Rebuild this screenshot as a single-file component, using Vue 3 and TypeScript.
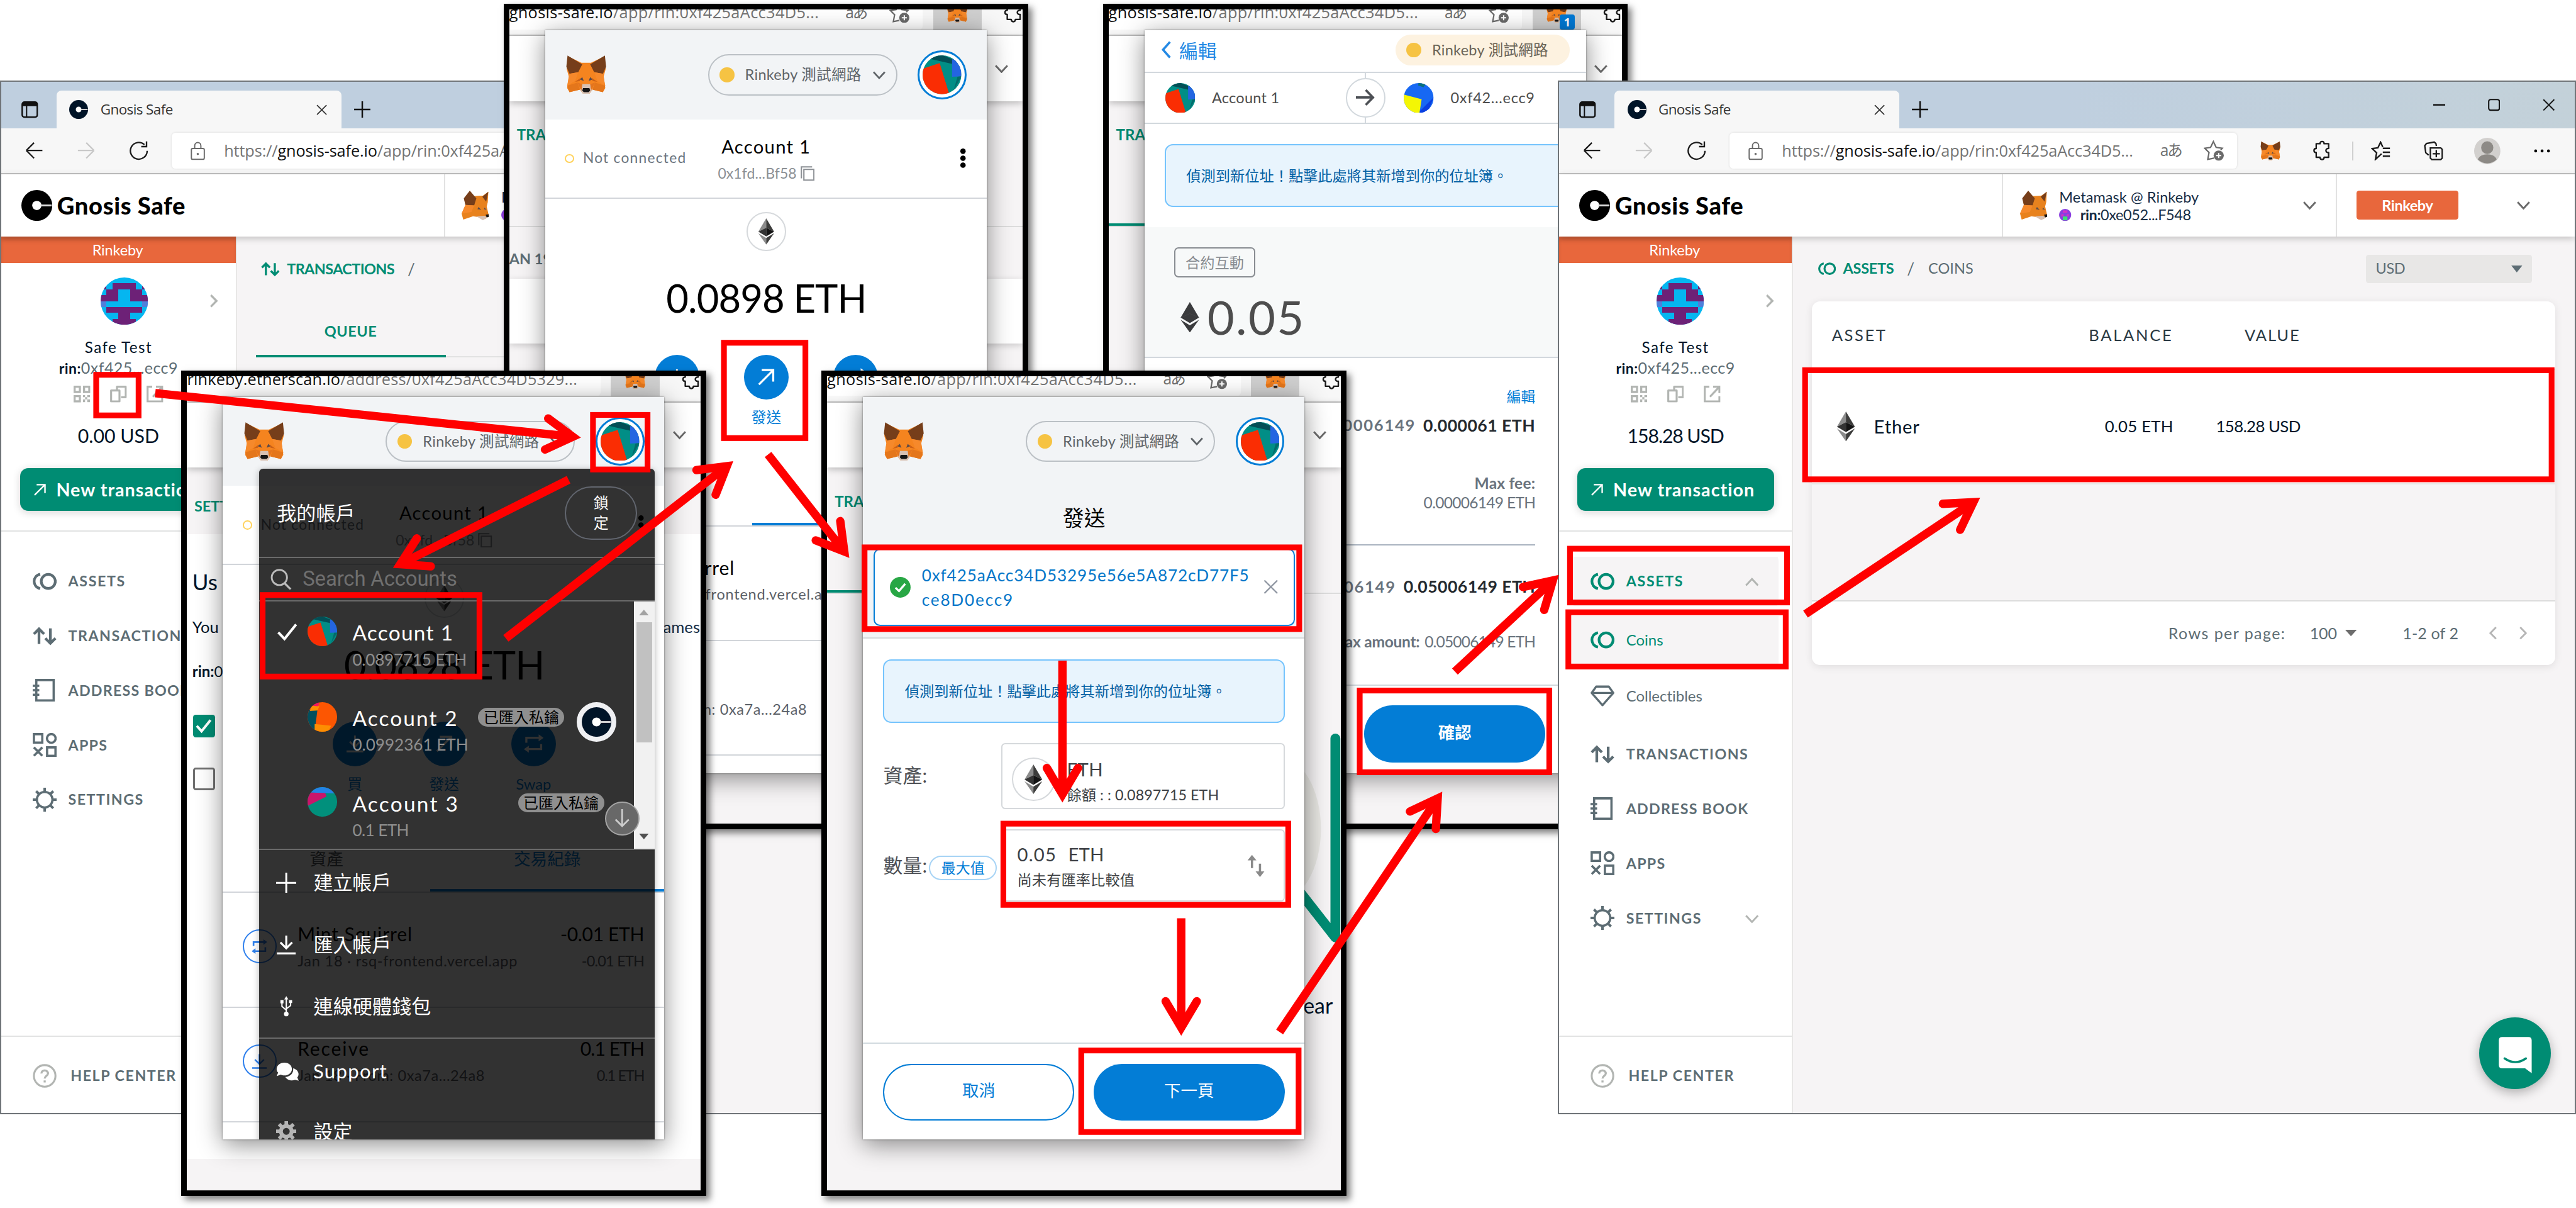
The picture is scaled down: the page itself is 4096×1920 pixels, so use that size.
<script setup lang="ts">
import type { Directive } from 'vue'

const STAGE_WIDTH = 1568

/* Spreads the letters of a label so that it takes exactly the given width. */
const vFit: Directive<HTMLElement, number> = {
  mounted(el, { value }) {
    const stage = el.closest('.stage') as HTMLElement
    const unit = stage.getBoundingClientRect().width / STAGE_WIDTH
    const width = el.getBoundingClientRect().width / unit
    const count = Array.from((el.textContent ?? '').trim()).length
    el.style.letterSpacing = `${(value - width) / count}px`
  },
}

interface Win { id: 'before' | 'after'; left: number; z: number; total: string; totalWidth: number }
const wins: Win[] = [
  { id: 'before', left: 0, z: 0, total: '0.00 USD', totalWidth: 49.5 },
  { id: 'after', left: 948.3, z: 6, total: '158.28 USD', totalWidth: 58.6 },
]

interface NavItem { icon: string; label: string; width: number; kind?: 'on' | 'sub-on' | 'sub'; chev?: string }
const navs: Record<Win['id'], NavItem[]> = {
  before: [
    { icon: 'assets', label: 'ASSETS', width: 35 },
    { icon: 'tx', label: 'TRANSACTIONS', width: 74.5 },
    { icon: 'book', label: 'ADDRESS BOOK', width: 74.5 },
    { icon: 'apps', label: 'APPS', width: 24 },
    { icon: 'gear', label: 'SETTINGS', width: 46 },
  ],
  after: [
    { icon: 'assets', label: 'ASSETS', width: 35, kind: 'on', chev: 'up' },
    { icon: 'assets', label: 'Coins', width: 22.5, kind: 'sub-on' },
    { icon: 'gem', label: 'Collectibles', width: 46.5, kind: 'sub' },
    { icon: 'tx', label: 'TRANSACTIONS', width: 74.5 },
    { icon: 'book', label: 'ADDRESS BOOK', width: 74.5 },
    { icon: 'apps', label: 'APPS', width: 24 },
    { icon: 'gear', label: 'SETTINGS', width: 46, chev: 'down' },
  ],
}

interface Frame { id: 'home' | 'confirm' | 'accounts' | 'send'; left: number; top: number }
const frames: Frame[] = [
  { id: 'home', left: 306.5, top: 2.3 },
  { id: 'confirm', left: 671.3, top: 2.3 },
  { id: 'accounts', left: 110.4, top: 225.3 },
  { id: 'send', left: 500, top: 225.3 },
]

const history = [
  { icon: 'swap', title: 'Mint Squirrel', tw: 70, sub: 'Jan 18 · rsq-frontend.vercel.app', sw: 134, amount: '-0.01 ETH', aw: 51, small: '-0.01 ETH', mw: 38 },
  { icon: 'down', title: 'Receive', tw: 44, sub: 'Jan 18 · From: 0xa7a...24a8', sw: 114, amount: '0.1 ETH', aw: 38.8, small: '0.1 ETH', mw: 28.8 },
]
const accounts = [
  { name: 'Account 1', width: 61.6, balance: '0.0897715 ETH', bw: 69.5, face: 'face1', on: true, imported: false },
  { name: 'Account 2', width: 64.5, balance: '0.0992361 ETH', bw: 70.5, face: 'face2', on: false, imported: true },
  { name: 'Account 3', width: 65, balance: '0.1 ETH', bw: 34.3, face: 'face3', on: false, imported: true },
]

/* Blockie of the safe: p = purple, b = blue, dots show the cyan ground. */
const blockie = ['........', 'p.pppp.p', '.pp..pp.', 'ppp..ppp', 'b......b', '.pppppp.', '...pp...', '..pppp..']
const cells = blockie.flatMap((row, y) =>
  Array.from(row).flatMap((c, x) => (c === '.' ? [] : [{ x, y, fill: c === 'p' ? '#6d2177' : '#4f7fdb' }])),
)

/* Red guide boxes: left, top, right, bottom of the outer edge. */
const boxes = [
  [56.8, 226.3, 86.1, 254.5], [359.2, 250.7, 395.9, 287.4], [158.1, 360.3, 293.6, 413.4],
  [438.9, 206.8, 492, 268.3], [524.5, 331.3, 792.6, 384.5], [609, 499.4, 785.9, 552.3],
  [656.4, 637.4, 792.2, 690.5], [825.9, 418.4, 944.8, 471.6], [953.9, 332.1, 1089.5, 368.3],
  [952.9, 370.8, 1088.7, 407.3], [1097, 223.5, 1554.9, 293.4],
].map(([l, t, r, b]) => ({ x: l + 1.75, y: t + 1.75, w: r - l - 3.5, h: b - t - 3.5 }))

/* Guide arrows: tail x, tail y, tip x, tip y. */
const arrows = [
  [94.5, 239.2, 353.8, 266.3], [346.1, 291.9, 239, 345.6], [307.9, 388.4, 446.5, 280.5],
  [467.5, 276.5, 517.1, 339.6], [646.7, 402, 646.7, 488.5], [719, 558.7, 719, 630.4],
  [778.9, 627.9, 878, 481.5], [885.6, 408.6, 949, 349.7], [1099, 373.6, 1205.5, 302.7],
].map(([x1, y1, x2, y2]) => {
  const len = Math.hypot(x2 - x1, y2 - y1)
  const ux = (x2 - x1) / len
  const uy = (y2 - y1) / len
  const at = (back: number, side: number) =>
    `${(x2 - ux * back - uy * side).toFixed(2)},${(y2 - uy * back + ux * side).toFixed(2)}`
  return { shaft: `M${x1},${y1}L${at(7, 0)}`, head: `M${at(21.2, 9.5)}L${at(5.2, 0)}L${at(21.2, -9.5)}` }
})
</script>

<template>
  <div class="stage">
    <svg class="defs" width="0" height="0">
      <symbol id="fox" viewBox="0 0 100 100">
        <path d="M4 4 38 20H62L96 4 99 36 94 54 98 84 92 94 66 88 58 98H42L34 88 8 94 2 84 6 54 1 36Z" fill="#f5841f" />
        <path d="M3 2 40 24 30 44 8 48 0 30ZM97 2 60 24 70 44 92 48 100 30Z" fill="#763e1a" />
        <path d="M8 48 30 44 22 66 2 78ZM92 48 70 44 78 66 98 78Z" fill="#f6892b" />
        <path d="M2 78 28 70 34 88 8 94ZM98 78 72 70 66 88 92 94Z" fill="#e4761b" />
        <path d="M36 58 22 68 34 66ZM64 58 78 68 66 66Z" fill="#cd6116" />
        <path d="M34 62 44 66 40 56ZM66 62 56 66 60 56Z" fill="#5b4a4a" />
        <path d="M34 88 40 74 60 74 66 88 58 98H42Z" fill="#d7c1b3" />
        <path d="M28 70 40 74 38 90ZM72 70 60 74 62 90Z" fill="#e4751f" />
        <path d="M42 84H58L60 90 56 94H44L40 90Z" fill="#161616" />
      </symbol>
      <symbol id="foxside" viewBox="0 0 100 108">
        <path d="M30 2 44 20 78 18 98 4 96 42 92 58 100 92 86 104 70 98 42 94 6 106 0 84 14 52 10 30Z" fill="#e8821e" />
        <path d="M30 0 54 28 46 54 14 52 8 28Z" fill="#763e1a" />
        <path d="M98 4 76 22 90 40Z" fill="#763e1a" />
        <path d="M14 52 46 54 36 78 0 84Z" fill="#f6892b" />
        <path d="M62 60 72 70 58 68ZM84 62 92 70 82 68Z" fill="#5b4a4a" />
        <path d="M54 94 84 92 96 98 78 108Z" fill="#d7c1b3" />
        <path d="M88 88 100 86 100 96 92 98Z" fill="#161616" />
      </symbol>
      <symbol id="eth" viewBox="0 0 60 100">
        <path d="M30 0 0 51 30 36Z" fill="#8c8c8c" /><path d="M30 0 60 51 30 36Z" fill="#3c3c3b" />
        <path d="M0 51 30 36V69Z" fill="#343434" /><path d="M60 51 30 36V69Z" fill="#141414" />
        <path d="M0 57 30 75V100Z" fill="#8c8c8c" /><path d="M60 57 30 75V100Z" fill="#3c3c3b" />
      </symbol>
      <symbol id="ethflat" viewBox="0 0 60 100">
        <path d="M30 0 60 51 30 69 0 51Z" fill="#3a3b3d" /><path d="M0 58 30 76 60 58 30 100Z" fill="#3a3b3d" />
        <path d="M0 51 30 38 60 51" fill="none" stroke="#505153" stroke-width="1" />
      </symbol>
      <clipPath id="disc"><circle cx="50" cy="50" r="50" /></clipPath>
      <symbol id="face1" viewBox="0 0 100 100"><g clip-path="url(#disc)"><path d="M0 0H100V100H0Z" fill="#018e86" /><path d="M15 8 42 -4 88 14 76 22Z" fill="#034f56" /><path d="M76 10H100V54L76 55Z" fill="#2465e1" /><path d="M100 54 90 55 80 90Z" fill="#046b6b" /><path d="M-4 36 44 20 70 104H-4Z" fill="#fa2d03" /></g></symbol>
      <symbol id="face2" viewBox="0 0 100 100"><g clip-path="url(#disc)"><path d="M0 0H100V100H0Z" fill="#fc5602" /><path d="M0 26 34 22 24 100H0Z" fill="#034f5d" /><path d="M8 30 14 10 40 14 34 28Z" fill="#fd8e02" /><path d="M18 0H40L36 14 16 12Z" fill="#f5175f" /><path d="M24 74 80 80 70 100H24Z" fill="#fd8e02" /></g></symbol>
      <symbol id="face3" viewBox="0 0 100 100"><g clip-path="url(#disc)"><path d="M0 0H100V100H0Z" fill="#01907c" /><path d="M0 0H100V22L0 18Z" fill="#2383e6" /><path d="M0 18 60 20 64 32 0 64Z" fill="#c9156b" /></g></symbol>
      <symbol id="face4" viewBox="0 0 100 100"><g clip-path="url(#disc)"><path d="M0 0H100V100H0Z" fill="#1768f3" /><path d="M50 0H76L66 14 48 8Z" fill="#0a6f7c" /><path d="M100 48 78 104 48 100Z" fill="#0a3fe0" /><path d="M-2 38 60 54 52 104H-2Z" fill="#f4f604" /></g></symbol>
      <symbol id="logo" viewBox="0 0 100 100">
        <circle cx="50" cy="50" r="50" fill="currentColor" /><circle cx="50" cy="50" r="15" fill="#fff" />
        <path d="M62 50H98" stroke="#ddd" stroke-width="6" />
      </symbol>
      <symbol id="chev" viewBox="0 0 16 10"><path d="M1.5 1.5 8 8.5 14.5 1.5" fill="none" stroke="currentColor" stroke-width="2" /></symbol>
      <symbol id="assets" viewBox="0 0 16 16"><g fill="none" stroke="currentColor" stroke-width="1.8"><ellipse cx="10.4" cy="8" rx="4.7" ry="4.7" /><path d="M5 3.2C-.4 4.4-.4 11.6 5 12.8" /></g></symbol>
      <symbol id="tx" viewBox="0 0 16 16"><path d="M4.2 13.2V3.4M.8 6.6 4.2 3.2 7.6 6.6M11.8 2.8V12.6M8.4 9.4 11.8 12.8 15.2 9.4" fill="none" stroke="currentColor" stroke-width="1.8" /></symbol>
      <symbol id="book" viewBox="0 0 16 16"><path d="M2.4 1.2H14V14.8H2.4ZM0 5H4.4M0 8H4.4M0 11H4.4" fill="none" stroke="currentColor" stroke-width="1.5" /></symbol>
      <symbol id="apps" viewBox="0 0 16 16"><path d="M.8.8H6.4V6.4H.8ZM9.6 9.6H15.2V15.2H9.6ZM.8 9.6 6.4 15.2M6.4 9.6 .8 15.2" fill="none" stroke="currentColor" stroke-width="1.5" /><circle cx="12.4" cy="3.6" r="2.9" fill="none" stroke="currentColor" stroke-width="1.5" /></symbol>
      <symbol id="gear" viewBox="0 0 16 16"><circle cx="8" cy="8" r="5.2" fill="none" stroke="currentColor" stroke-width="1.5" /><path d="M8 0V2.8M8 13.2V16M0 8H2.8M13.2 8H16M2.3 2.3 4.3 4.3M11.7 11.7 13.7 13.7M2.3 13.7 4.3 11.7M11.7 4.3 13.7 2.3" stroke="currentColor" stroke-width="1.7" /></symbol>
      <symbol id="gem" viewBox="0 0 16 16"><path d="M3.8 1.8H12.2L15.2 6 8 14.2.8 6ZM1 6H15" fill="none" stroke="currentColor" stroke-width="1.4" stroke-linejoin="round" /></symbol>
      <symbol id="help" viewBox="0 0 16 16"><circle cx="8" cy="8" r="7.2" fill="none" stroke="currentColor" stroke-width="1.3" /><path d="M5.8 6.4C5.8 3.6 10.3 3.8 10.2 6.4 10.1 8 8 8 8 9.8M8 11V12.4" fill="none" stroke="currentColor" stroke-width="1.4" /></symbol>
      <symbol id="qr" viewBox="0 0 16 16"><path d="M1 1H6V6H1ZM10 1H15V6H10ZM1 10H6V15H1Z" fill="none" stroke="currentColor" stroke-width="2" /><path d="M9 9H11V11H9ZM13 9H15.6V11H13ZM11 11H13V13H11ZM9 13H11V15.8H9ZM13 13H15.6V15.8H13Z" fill="currentColor" /></symbol>
      <symbol id="copy" viewBox="0 0 16 16"><path d="M6.6 4V1H15V11H10.5M1 4.6H9V15H1Z" fill="none" stroke="currentColor" stroke-width="1.9" stroke-linejoin="round" /></symbol>
      <symbol id="ext" viewBox="0 0 16 16"><path d="M5.4 1H1V15H15V10M9 1H15V7M15 1 6 10.6" fill="none" stroke="currentColor" stroke-width="1.9" /></symbol>
      <symbol id="arr" viewBox="0 0 16 16"><path d="M1.5 8H15M1.5 8 8 1.5M1.5 8 8 14.5" fill="none" stroke="currentColor" stroke-width="1.2" /></symbol>
      <symbol id="reload" viewBox="0 0 16 16"><path d="M14.8 8A6.8 6.8 0 1 1 12.6 3M14.3.4V4.6H10" fill="none" stroke="currentColor" stroke-width="1.2" /></symbol>
      <symbol id="lock" viewBox="0 0 14 18"><path d="M2 6.6H12Q13.3 6.6 13.3 8V15.6Q13.3 17.2 12 17.2H2Q.8 17.2.8 15.6V8Q.8 6.6 2 6.6ZM4 6.6V4A3 3.2 0 0 1 10 4V6.6" fill="none" stroke="currentColor" stroke-width="1.2" /><circle cx="7" cy="12" r="1.1" fill="currentColor" /></symbol>
      <symbol id="starplus" viewBox="0 0 16 16"><path d="M8 14 3.2 15 4.2 9.6.8 6.2 5.4 5.6 7.6 1 9.8 5.6 14.6 6.2 13.4 7.6" fill="none" stroke="currentColor" stroke-width="1.1" /><circle cx="11.8" cy="12" r="4" fill="currentColor" /><path d="M9.8 12H13.8M11.8 10V14" stroke="#fff" stroke-width="1" /></symbol>
      <symbol id="puzzle" viewBox="0 0 16 18"><path d="M5 3H6.4C6.4.4 10 .4 10 3H14V7.2C10.8 7 10.8 11 14 10.8V15H10C10 17.6 6.4 17.6 6.4 15H3V10.8C.4 10.8.4 7.2 3 7.2V3Z" fill="none" stroke="currentColor" stroke-width="1.3" stroke-linejoin="round" /></symbol>
      <symbol id="favs" viewBox="0 0 16 16"><path d="M8.6 10.4 3.6 15 4.6 9.6 1 6.2 5.6 5.6 7.8 1 9.6 5M9.6 6H15.4M9.6 9.2H15.4M9.6 12.4H15.4" fill="none" stroke="currentColor" stroke-width="1.2" /></symbol>
      <symbol id="coll" viewBox="0 0 16 16"><path d="M4 11.6 1.6 9.6.8 3.8 2.2 2 8.6.8 10 2 10.4 4M5.4 5.6H14L15.2 6.8V14L14 15.2H6.6L5.4 14ZM10.3 7.4V13.4M7.3 10.4H13.3" fill="none" stroke="currentColor" stroke-width="1.2" /></symbol>
      <symbol id="panel" viewBox="0 0 16 16"><rect x=".8" y=".8" width="14.4" height="14.4" rx="2.2" fill="none" stroke="currentColor" stroke-width="1.5" /><path d="M1 1H15V4.6H1Z" fill="currentColor" /><path d="M5 4V15" stroke="currentColor" stroke-width="1.2" /></symbol>
      <symbol id="cross" viewBox="0 0 16 16"><path d="M1 1 15 15M15 1 1 15" stroke="currentColor" stroke-width="1.6" /></symbol>
      <symbol id="plus" viewBox="0 0 16 16"><path d="M8 0V16M0 8H16" stroke="currentColor" stroke-width="1.5" /></symbol>
      <symbol id="ne" viewBox="0 0 16 16"><path d="M1.5 14.5 14 2M4 1.8H14.2V12" fill="none" stroke="currentColor" stroke-width="1.8" /></symbol>
      <symbol id="down" viewBox="0 0 16 16"><path d="M8 1V10.6M3.4 6.4 8 11 12.6 6.4M.6 15H15.4" fill="none" stroke="currentColor" stroke-width="1.6" /></symbol>
      <symbol id="swap" viewBox="0 0 16 16"><path d="M2 7.4V3.4H13M14 8.6V12.6H3" fill="none" stroke="currentColor" stroke-width="1.7" /><path d="M12 .6 16 3.4 12 6.2ZM4 9.8 0 12.6 4 15.4Z" fill="currentColor" /></symbol>
      <symbol id="usb" viewBox="0 0 16 16"><path d="M8 2V14M4.6 5V8L8 11M11.4 4.6V7.4L8 10" fill="none" stroke="currentColor" stroke-width="1" /><circle cx="8" cy="14" r="1.8" fill="currentColor" /><path d="M8 0 9.6 2.6H6.4ZM3.4 3H5.8V5.6H3.4ZM10.2 3H12.6V5.4H10.2Z" fill="currentColor" /></symbol>
      <symbol id="chat" viewBox="0 0 18 16"><path d="M6.5 1C10 1 12.4 3.4 12.4 6S10 11 6.5 11C5.4 11 4.4 10.8 3.6 10.4L.4 11.6 1.6 8.8C.8 8 .4 7 .4 6 .4 3.4 3 1 6.5 1Z" fill="currentColor" /><path d="M13.4 5.4C16 6 17.6 8 17.6 10 17.6 11 17.2 12 16.6 12.6L17.8 15.2 14.8 14.4C12 15.6 8.6 14.6 7.2 12.2 11 12 13.8 9.4 13.4 5.4Z" fill="currentColor" /></symbol>
      <symbol id="cog" viewBox="0 0 16 16"><circle cx="8" cy="8" r="4.2" fill="none" stroke="currentColor" stroke-width="3" /><path d="M8 0V3M8 13V16M0 8H3M13 8H16M2.3 2.3 4.5 4.5M11.5 11.5 13.7 13.7M2.3 13.7 4.5 11.5M11.5 4.5 13.7 2.3" stroke="currentColor" stroke-width="2.8" /></symbol>
    </svg>

    <!-- Browser windows before and after the deposit -->
    <section v-for="w in wins" :key="w.id" class="win" :style="{ left: w.left + 'px', zIndex: w.z }">
      <header class="titlebar">
        <div class="tabs">
          <svg class="toggle" width="10.2" height="10.2"><use href="#panel" /></svg>
          <div class="tab">
            <svg class="navy" width="11.5" height="11.5"><use href="#logo" /></svg>
            <span v-fit="44">Gnosis Safe</span>
            <svg class="close" width="6.6" height="6.6"><use href="#cross" /></svg>
          </div>
          <svg width="10" height="10"><use href="#plus" /></svg>
        </div>
        <svg class="min" width="7.4" height="7.4" viewBox="0 0 16 16"><path d="M0 8H16" stroke="#111" stroke-width="2" /></svg>
        <svg class="max" width="7.4" height="7.4" viewBox="0 0 16 16"><rect x="1" y="1" width="14" height="14" rx="2.5" fill="none" stroke="#111" stroke-width="1.7" /></svg>
        <svg width="7.5" height="7.5"><use href="#cross" /></svg>
      </header>
      <div class="toolbar">
        <svg class="back" width="11.6" height="11.6"><use href="#arr" /></svg>
        <svg class="fwd" width="11.6" height="11.6"><use href="#arr" /></svg>
        <svg class="reload" width="12" height="12"><use href="#reload" /></svg>
        <div class="address">
          <svg width="8.8" height="11.4"><use href="#lock" /></svg>
          <span v-fit="213.8" class="url">https://<b>gnosis-safe.io</b>/app/rin:0xf425aAcc34D5...</span>
          <span class="kana">aあ</span>
          <svg width="12.4" height="12.4"><use href="#starplus" /></svg>
        </div>
        <svg class="t1" width="12.4" height="12"><use href="#fox" /></svg>
        <svg class="t2" width="11.4" height="12.4"><use href="#puzzle" /></svg>
        <i class="tdiv"></i>
        <svg class="t3" width="12" height="12"><use href="#favs" /></svg>
        <svg class="t4" width="11.8" height="12"><use href="#coll" /></svg>
        <svg class="t5" width="16" height="16" viewBox="0 0 32 32"><circle cx="16" cy="16" r="16" fill="#d2d0ce" /><ellipse cx="16" cy="12" rx="7.4" ry="7.8" fill="#8d8a86" /><path d="M4.6 26.4C7 18 25 18 27.4 26.4A16 16 0 0 1 4.6 26.4Z" fill="#8d8a86" /></svg>
        <svg width="10" height="3" viewBox="0 0 20 6"><circle cx="2.2" cy="3" r="1.8" /><circle cx="10" cy="3" r="1.8" /><circle cx="17.8" cy="3" r="1.8" /></svg>
      </div>
      <div class="apphead">
        <div class="brand">
          <svg width="18.8" height="18.8"><use href="#logo" /></svg>
          <span v-fit="78.2">Gnosis Safe</span>
        </div>
        <div class="wallet">
          <svg width="16.6" height="18"><use href="#foxside" /></svg>
          <div class="who">
            <span v-fit="85">Metamask @ Rinkeby</span>
            <div class="whoid">
              <svg width="7.4" height="7.4" viewBox="0 0 16 16"><circle cx="8" cy="8" r="8" fill="#8a3fe0" /><path d="M5 2H11V5H5ZM3 7H6V10H3ZM10 7H13V10H10Z" fill="#d531c8" /><path d="M5 10H11V15H5Z" fill="#3fe07a" /></svg>
              <span v-fit="67.4"><b>rin:</b>0xe052...F548</span>
            </div>
          </div>
          <svg class="dim" width="8.8" height="5.6"><use href="#chev" /></svg>
        </div>
        <div class="net">
          <span class="netbadge"><span v-fit="31">Rinkeby</span></span>
          <svg class="dim" width="8.8" height="5.6"><use href="#chev" /></svg>
        </div>
      </div>
      <div class="body">
        <aside class="side">
          <div class="band"><span v-fit="31">Rinkeby</span></div>
          <div class="ident">
            <svg width="28.8" height="28.8" viewBox="0 0 8 8" shape-rendering="crispEdges">
              <clipPath :id="'round-' + w.id"><circle cx="4" cy="4" r="4" /></clipPath>
              <g :clip-path="`url(#round-${w.id})`">
                <path d="M0 0H8V8H0Z" fill="#05b6f0" />
                <rect v-for="(c, i) in cells" :key="i" :x="c.x" :y="c.y" width="1" height="1" :fill="c.fill" />
              </g>
            </svg>
            <svg class="more" width="5.4" height="8.6" viewBox="0 0 10 16"><path d="M1.6 1.5 8 8 1.6 14.5" fill="none" stroke="currentColor" stroke-width="2.4" /></svg>
          </div>
          <div class="sname"><span v-fit="41">Safe Test</span></div>
          <div class="saddr"><span v-fit="72.4"><b>rin:</b>0xf425...ecc9</span></div>
          <div class="sicons">
            <svg width="10.2" height="10.2"><use href="#qr" /></svg>
            <svg width="10.2" height="10.2"><use href="#copy" /></svg>
            <svg width="10.2" height="10.2"><use href="#ext" /></svg>
          </div>
          <div class="stotal"><span v-fit="w.totalWidth">{{ w.total }}</span></div>
          <div class="newtx">
            <svg width="8" height="8"><use href="#ne" /></svg>
            <span v-fit="86.4">New transaction</span>
          </div>
          <nav class="nav">
            <div v-for="n in navs[w.id]" :key="n.label" class="item" :class="n.kind">
              <svg width="14.6" height="14.6"><use :href="'#' + n.icon" /></svg>
              <span v-fit="n.width">{{ n.label }}</span>
              <svg v-if="n.chev" class="fold" :class="n.chev" width="9" height="5.6"><use href="#chev" /></svg>
            </div>
          </nav>
          <div class="helpc">
            <svg width="14.6" height="14.6"><use href="#help" /></svg>
            <span v-fit="64.5">HELP CENTER</span>
          </div>
        </aside>

        <main v-if="w.id === 'before'" class="main">
          <div class="crumb">
            <svg width="11.4" height="11.4"><use href="#tx" /></svg>
            <b v-fit="65.4">TRANSACTIONS</b><i>/</i>
          </div>
          <div class="qtabs"><span class="qtab"><b v-fit="32">QUEUE</b></span></div>
        </main>

        <main v-else class="main">
          <div class="crumb coins">
            <svg width="10.8" height="10.8"><use href="#assets" /></svg>
            <b v-fit="31">ASSETS</b><i>/</i><span v-fit="27.4">COINS</span>
            <div class="cur"><span v-fit="18">USD</span><svg width="6.8" height="4.2" viewBox="0 0 16 10"><path d="M0 0H16L8 10Z" fill="#5d6d74" /></svg></div>
          </div>
          <div class="card">
            <div class="trow th"><span class="c1"><span v-fit="33.6">ASSET</span></span><span class="c2"><span v-fit="51.4">BALANCE</span></span><span class="c3"><span v-fit="34">VALUE</span></span></div>
            <div class="trow td">
              <span class="c1"><svg width="11.6" height="18.2"><use href="#eth" /></svg><span v-fit="28" class="coin">Ether</span></span>
              <span class="c2"><span v-fit="41.7">0.05 ETH</span></span>
              <span class="c3"><span v-fit="51.4">158.28 USD</span></span>
            </div>
            <div class="tgap"></div>
            <div class="tfoot">
              <span v-fit="71.5">Rows per page:</span>
              <span v-fit="16.5" class="n100">100</span>
              <svg class="car" width="7" height="4" viewBox="0 0 16 9"><path d="M0 0H16L8 9Z" fill="#6d6d6d" /></svg>
              <span v-fit="34">1-2 of 2</span>
              <svg class="pg" width="5.4" height="8.6" viewBox="0 0 10 16"><path d="M8.4 1.5 2 8 8.4 14.5" fill="none" stroke="#b5b5b5" stroke-width="2" /></svg>
              <svg width="5.4" height="8.6" viewBox="0 0 10 16"><path d="M1.6 1.5 8 8 1.6 14.5" fill="none" stroke="#b5b5b5" stroke-width="2" /></svg>
            </div>
          </div>
          <div class="fab"><svg width="21" height="23" viewBox="0 0 42 46"><path d="M5 1H37Q41 1 41 5V45L33 39H5Q1 39 1 35V5Q1 1 5 1Z" fill="#fff" /><path d="M8 27Q21 36 34 27" fill="none" stroke="#008c73" stroke-width="2.6" stroke-linecap="round" /></svg></div>
        </main>
      </div>
    </section>

    <!-- Framed captures of the wallet popup -->
    <section v-for="f in frames" :key="f.id" class="frame" :class="f.id" :style="{ left: f.left + 'px', top: f.top + 'px' }">
      <div class="ptool">
        <div class="paddr">
          <div class="strip">
            <template v-if="f.id === 'accounts'">
              <span v-fit="237.6" class="url"><b>rinkeby.etherscan.io</b>/address/0xf425aAcc34D5329...</span>
            </template>
            <template v-else>
              <span v-fit="188.6" class="url"><b>gnosis-safe.io</b>/app/rin:0xf425aAcc34D5...</span>
              <span class="kana">aあ</span>
              <svg width="12.4" height="12.4"><use href="#starplus" /></svg>
            </template>
          </div>
        </div>
        <div class="pbtn"><div class="strip"><svg width="12.4" height="12.4"><use href="#fox" /></svg></div><em v-if="f.id === 'confirm'" class="note">1</em></div>
        <div class="strip pz"><svg width="11.4" height="12.8"><use href="#puzzle" /></svg></div>
      </div>
      <div class="phead"><svg class="dim" width="8.8" height="5.6"><use href="#chev" /></svg></div>

      <div v-if="f.id === 'accounts'" class="under">
        <div class="uset"><b>SETT</b></div>
        <div class="uh">Us</div>
        <div class="ut"><span>You</span><span class="ames">ames</span></div>
        <div class="ur"><b>rin:</b>0</div>
        <div class="ubox on"><svg width="10.6" height="9" viewBox="0 0 16 14"><path d="M1.5 7 6 12 14.5 1.5" fill="none" stroke="#fff" stroke-width="2.4" /></svg></div>
        <div class="ubox"></div>
      </div>
      <div v-else class="under">
        <div class="utra"><b>TRA</b></div>
        <div class="uline"></div>
        <template v-if="f.id === 'home'">
          <div class="ujan"><b>AN 19</b></div>
          <div class="ucard"></div>
        </template>
        <svg v-if="f.id === 'send'" class="art" width="24" height="176" viewBox="0 0 24 176">
          <ellipse cx="-14" cy="58" rx="26" ry="44" fill="#e8e7e3" />
          <path d="M20.8 3V124L-16 77" fill="none" stroke="#008c73" stroke-width="6" stroke-linecap="round" stroke-linejoin="round" />
          <text x="1.2" y="170.4" class="ear">ear</text>
        </svg>
      </div>

      <div class="pop">
        <div v-if="f.id !== 'confirm'" class="whead">
          <svg width="24.6" height="24.2"><use href="#fox" /></svg>
          <div class="pill"><i></i><span v-fit="70.8">Rinkeby 測試網路</span><svg width="8.4" height="5.6"><use href="#chev" /></svg></div>
          <div class="me"><svg width="23.6" height="23.6"><use href="#face1" /></svg></div>
        </div>

        <!-- Wallet home, shared by the home and the accounts captures -->
        <template v-if="f.id === 'home' || f.id === 'accounts'">
          <div class="wacct">
            <div class="conn"><i></i><span v-fit="63">Not connected</span></div>
            <div class="wname">
              <span v-fit="54.4" class="nm">Account 1</span>
              <span class="ad"><span v-fit="48">0x1fd...Bf58</span><svg width="8.6" height="9"><path d="M.5 7.5V.5H7M2 2H8.1V8.5H2Z" fill="none" stroke="#8b8f94" stroke-width=".8" /></svg></span>
            </div>
            <svg class="kebab" width="4" height="12.6" viewBox="0 0 8 25"><circle cx="4" cy="4" r="3.3" /><circle cx="4" cy="12.5" r="3.3" /><circle cx="4" cy="21" r="3.3" /></svg>
          </div>
          <div class="wbal">
            <div class="coinring"><svg width="10.2" height="16"><use href="#eth" /></svg></div>
            <div class="bal"><span v-fit="121.8">0.0898 ETH</span></div>
            <div class="acts">
              <div class="act"><b><svg width="11" height="12"><use href="#down" /></svg></b><span>買</span></div>
              <div class="act"><b><svg width="11" height="11"><use href="#ne" /></svg></b><span>發送</span></div>
              <div class="act"><b><svg width="12" height="12"><use href="#swap" /></svg></b><span>Swap</span></div>
            </div>
          </div>
          <div class="wtabs"><span>資產</span><span class="sel">交易紀錄</span></div>
          <div v-for="h in history" :key="h.title" class="hist">
            <div class="hic"><svg width="9.6" height="9.6"><use :href="'#' + h.icon" /></svg></div>
            <div class="hl"><span v-fit="h.tw" class="ht">{{ h.title }}</span><span v-fit="h.sw" class="hs">{{ h.sub }}</span></div>
            <div class="hr"><span v-fit="h.aw" class="ht">{{ h.amount }}</span><span v-fit="h.mw" class="hs">{{ h.small }}</span></div>
          </div>
        </template>

        <div v-if="f.id === 'accounts'" class="menu">
          <div class="mhead"><span v-fit="47.6">我的帳戶</span><div class="mlock"><span>鎖</span><span>定</span></div></div>
          <div class="msearch"><svg width="12.8" height="12.8" viewBox="0 0 16 16"><circle cx="6.8" cy="6.6" r="5.8" fill="none" stroke="#bbb" stroke-width="1.4" /><path d="M10.8 11 15.4 15.6" stroke="#bbb" stroke-width="1.6" /></svg><span v-fit="94">Search Accounts</span></div>
          <div class="mlist">
            <div class="mrows">
              <div v-for="a in accounts" :key="a.name" class="mrow">
                <svg class="tick" width="12.6" height="11" viewBox="0 0 16 14"><path v-if="a.on" d="M1.2 7.4 6 12.4 15 1.2" fill="none" stroke="#fff" stroke-width="2" /></svg>
                <svg class="mface" width="18" height="18"><use :href="'#' + a.face" /></svg>
                <div class="mtxt"><span v-fit="a.width" class="mn">{{ a.name }}</span><span v-fit="a.bw" class="mb">{{ a.balance }}</span></div>
                <div v-if="a.imported" class="mside">
                  <span class="mbadge"><span v-fit="46">已匯入私鑰</span></span>
                  <div v-if="a.name === 'Account 2'" class="msafe"><svg class="navy" width="18" height="18"><use href="#logo" /></svg></div>
                </div>
              </div>
            </div>
            <div class="bar">
              <svg width="6" height="3.4" viewBox="0 0 12 7"><path d="M6 0 12 7H0Z" fill="#a3a3a3" /></svg>
              <i></i>
              <svg width="6" height="3.4" viewBox="0 0 12 7"><path d="M0 0H12L6 7Z" fill="#505050" /></svg>
            </div>
            <div class="mdown"><svg width="9.4" height="11.4" viewBox="0 0 14 17"><path d="M7 0V15.4M1 9.4 7 15.4 13 9.4" fill="none" stroke="#ccc" stroke-width="1.6" /></svg></div>
          </div>
          <div class="mopts">
            <div class="mopt"><svg width="12.4" height="12.4"><use href="#plus" /></svg><span v-fit="47.3">建立帳戶</span></div>
            <div class="mopt"><svg width="12.4" height="12.4"><use href="#down" /></svg><span v-fit="47.3">匯入帳戶</span></div>
            <div class="mopt"><svg width="12.4" height="13.4"><use href="#usb" /></svg><span v-fit="71.5">連線硬體錢包</span></div>
          </div>
          <div class="mopts last">
            <div class="mopt"><svg width="14" height="12.4"><use href="#chat" /></svg><span v-fit="45.2" class="sup">Support</span></div>
            <div class="mopt"><svg class="cog" width="12.4" height="12.4"><use href="#cog" /></svg><span v-fit="23.6">設定</span></div>
          </div>
        </div>

        <template v-if="f.id === 'send'">
          <div class="sendtop">
            <div class="stitle">發送</div>
            <div class="sinput">
              <svg width="12.6" height="12.6" viewBox="0 0 20 20"><circle cx="10" cy="10" r="10" fill="#28a745" /><path d="M5.4 10.4 8.8 13.6 14.8 6.6" fill="none" stroke="#fff" stroke-width="2" /></svg>
              <div class="saddrs"><span v-fit="199.4">0xf425aAcc34D53295e56e5A872cD77F5</span><span v-fit="56">ce8D0ecc9</span></div>
              <svg class="sx" width="9" height="9"><use href="#cross" /></svg>
            </div>
          </div>
          <div class="alert"><span v-fit="195.6">偵測到新位址！點擊此處將其新增到你的位址簿。</span></div>
          <div class="field fa">
            <span class="lab">資產:</span>
            <div class="fbox">
              <div class="ering"><svg width="11.6" height="18"><use href="#eth" /></svg></div>
              <div class="ftxt"><span v-fit="22" class="big">ETH</span><span v-fit="92.6" class="small">餘額 : : 0.0897715 ETH</span></div>
            </div>
          </div>
          <div class="field fb">
            <span class="lab">數量:</span><span class="maxp"><span v-fit="26.4">最大值</span></span>
            <div class="fbox amt">
              <div class="ftxt"><span class="big two"><span v-fit="24">0.05</span><span v-fit="21.8">ETH</span></span><span v-fit="71.4" class="small">尚未有匯率比較值</span></div>
              <svg width="10.8" height="14" viewBox="0 0 16 20"><path d="M4.4 12V3.6M11.6 8V16.4" stroke="#8a8a8a" stroke-width="2" /><path d="M4.4 0 8.4 5H.4ZM11.6 20 15.6 15H7.6Z" fill="#8a8a8a" /></svg>
            </div>
          </div>
          <div class="sfoot"><span class="btn ghost"><span v-fit="20.2">取消</span></span><span class="btn"><span v-fit="30.4">下一頁</span></span></div>
        </template>

        <template v-if="f.id === 'confirm'">
          <div class="cnav">
            <svg width="6.4" height="10.8" viewBox="0 0 10 17"><path d="M8.6 1 2 8.5 8.6 16" fill="none" stroke="#2489e4" stroke-width="2.2" /></svg><span v-fit="22.8" class="edit">編輯</span>
            <div class="cpill"><i></i><span v-fit="70.8">Rinkeby 測試網路</span></div>
          </div>
          <div class="cfrom">
            <svg width="18.2" height="18.2"><use href="#face1" /></svg><span v-fit="41.2">Account 1</span>
            <div class="cmid"><i></i><div><svg width="11.4" height="11.4" viewBox="0 0 16 16"><path d="M0 8H14.4M8.4 1.6 14.6 8 8.4 14.4" fill="none" stroke="#4d5055" stroke-width="2" /></svg></div><i></i></div>
            <svg width="18.2" height="18.2"><use href="#face4" /></svg><span v-fit="51.4">0xf42...ecc9</span>
          </div>
          <div class="alert calert"><span v-fit="195.6">偵測到新位址！點擊此處將其新增到你的位址簿。</span></div>
          <div class="csum">
            <div class="ctag"><span v-fit="35.6">合約互動</span></div>
            <div class="camt"><svg width="12.2" height="18.6"><use href="#ethflat" /></svg><span v-fit="59.6">0.05</span></div>
          </div>
          <div class="cfees">
            <div class="cedit">編輯</div>
            <div class="cl1"><span v-fit="60" class="g">0.00006149</span><b v-fit="68.2">0.000061 ETH</b></div>
            <div class="cl2"><b v-fit="37">Max fee:</b></div>
            <div class="cl3"><span v-fit="68">0.00006149 ETH</span></div>
            <div class="cl4"><span v-fit="60" class="g">0.05006149</span><b v-fit="80.2">0.05006149 ETH</b></div>
            <div class="cl5"><b v-fit="54">Max amount:</b><span v-fit="67.4">0.05006149 ETH</span></div>
          </div>
          <div class="cfoot"><span class="btn cbtn"><span v-fit="20.2">確認</span></span></div>
        </template>
      </div>
    </section>

    <!-- Red guides over everything -->
    <svg class="guides" viewBox="0 0 1568 735" width="1568" height="735">
      <rect v-for="(b, i) in boxes" :key="'b' + i" :x="b.x" :y="b.y" :width="b.w" :height="b.h" />
      <g v-for="(a, i) in arrows" :key="'a' + i"><path :d="a.shaft" /><path :d="a.head" stroke-linecap="round" /></g>
    </svg>
  </div>
</template>

<style>
html, body { margin: 0; background: #fff; overflow: hidden; }
</style>

<style scoped>
.stage { position: relative; width: 1568px; height: 735px; zoom: 2.612245; overflow: hidden; background: #fff; font: 9px/1 Lato, "Noto Sans CJK TC", sans-serif; color: #001428; }
.stage *, .stage *::before { box-sizing: border-box; }
.stage span, .stage b { white-space: nowrap; }
.stage i, .stage em { font-style: normal; }
svg { display: block; flex: none; }
.defs { position: absolute; }
.navy { color: #001428; }
.dim { color: #6b6b6b; }

/* browser window */
.win { position: absolute; top: 49px; width: 619.7px; height: 629px; border: .8px solid #6f7478; background: #f6f4f5; display: flex; flex-direction: column; overflow: hidden; }
.titlebar { height: 28.4px; background: linear-gradient(90deg, #bfcfdf 50%, #c3d1d9); display: flex; align-items: center; padding-right: 12.2px; color: #111; }
.tabs { display: flex; align-items: center; height: 22.9px; align-self: flex-end; margin-right: auto; }
.toggle { margin: 0 11.3px 0 12.2px; }
.tab { width: 173.4px; height: 100%; background: #f7f7f7; border-radius: 3px 3px 0 0; display: flex; align-items: center; padding: 0 8.6px 0 7.8px; margin-right: 7.5px; font: 8.6px/1 "Open Sans", sans-serif; color: #333; }
.tab span { margin-left: 7.4px; }
.close { margin-left: auto; }
.min, .max { margin-right: 25.8px; }
.toolbar { height: 27.9px; background: #f7f7f7; border-bottom: .9px solid #c2c2c2; display: flex; align-items: center; color: #1b1b1b; }
.back { margin-left: 14.2px; }
.fwd { transform: scaleX(-1); margin-left: 20.2px; color: #c8c8c8; }
.reload { margin-left: 20px; }
.address { display: flex; align-items: center; width: 308.7px; height: 21.6px; margin-left: 14.2px; background: #fff; border-radius: 2.4px; box-shadow: 0 0 1.5px rgba(0,0,0,.12); padding: 0 7.6px 0 11.5px; color: #6a6a6a; }
.url { font: 9.7px/1 "Open Sans", sans-serif; color: #747474; }
.url b { font-weight: 400; color: #111; }
.address .url { margin: 0 auto 0 11.5px; }
.kana { font: 9.4px/1 "Open Sans", "Noto Sans CJK JP", sans-serif; letter-spacing: -.8px; color: #6e6e6e; margin-right: 13.7px; }
.t1 { margin-left: 14.1px; }
.t2 { margin-left: 19.6px; }
.tdiv { width: .8px; height: 11.4px; background: #d0d0d0; margin: 0 11px 0 12.5px; }
.t4 { margin-left: 20px; }
.t5 { margin: 0 20.2px 0 19px; }
.apphead { height: 37.7px; background: #fff; display: flex; box-shadow: 0 1px 4px rgba(0,0,0,.22); position: relative; z-index: 2; }
.brand { width: 269.6px; display: flex; align-items: center; padding-left: 12.2px; color: #000; font-size: 14.6px; font-weight: 900; }
.brand span { margin-left: 3px; }
.wallet { width: 203.9px; border-left: 1px solid #e2e2e2; border-right: 1px solid #e2e2e2; display: flex; align-items: center; padding: 0 11.6px 0 10px; }
.who { margin: 0 auto 0 7.4px; font-size: 9px; color: #162d45; display: flex; flex-direction: column; gap: 1.8px; padding-top: 1px; }
.whoid { display: flex; align-items: center; gap: 5.4px; }
.net { flex: 1; display: flex; align-items: center; padding: 0 26.8px 0 11.8px; justify-content: space-between; }
.netbadge { width: 62px; height: 17.5px; border-radius: 1.6px; background: #e8673c; color: #fff; display: flex; align-items: center; justify-content: center; font-size: 9px; font-weight: 700; }
.body { flex: 1; display: flex; min-height: 0; }
.side { width: 143.5px; background: #fff; border-right: .8px solid #e8e7e6; display: flex; flex-direction: column; align-items: center; }
.band { width: 100%; height: 16.1px; background: #e8673c; color: #fff; display: flex; align-items: center; justify-content: center; padding: 1px 1px 0 0; box-shadow: inset 0 2px 2px rgba(0,0,0,.1); }
.ident { width: 100%; height: 45px; display: flex; align-items: center; justify-content: flex-end; padding: 1.6px 10.8px 0 0; }
.more { color: #b2b5b2; margin-left: 37.4px; }
.sname { height: 12.8px; display: flex; align-items: center; font-size: 9.3px; }
.saddr { height: 12.2px; display: flex; align-items: center; font-size: 9.6px; color: #5d6d74; }
.saddr b { color: #001428; font-size: 8.8px; }
.sicons { height: 19.8px; display: flex; align-items: center; gap: 12.1px; color: #b2b5b2; }
.stotal { height: 30.6px; display: flex; align-items: center; font-size: 11.6px; }
.newtx { width: 119.8px; height: 26px; margin: 4.6px 0 12px; border-radius: 5px; background: #008c73; color: #fff; font-size: 11px; font-weight: 700; box-shadow: 0 1px 5px rgba(0,0,0,.16); display: flex; align-items: center; padding-left: 8.2px; }
.newtx span { margin-left: 5.8px; }
.nav { width: 100%; flex: 1; border-top: .9px solid #e2e3e3; padding: 13.4px 8px 0; }
.item { height: 33.25px; display: flex; align-items: center; padding: 0 11.6px 0 11px; color: #5d6d74; font-size: 8.9px; font-weight: 700; }
.item span { margin-left: 7.2px; }
.item.on, .item.sub-on { color: #008c73; }
.item.on { background: linear-gradient(#f6f4f5, #f6f4f5) center / 100% 30px no-repeat; border-radius: 4px; }
.item.sub-on { height: 38px; font-weight: 400; background: linear-gradient(#f6f4f5, #f6f4f5) center / 100% 29px no-repeat; }
.item.sub { height: 30.4px; margin-bottom: 3.6px; font-weight: 400; }
.item.sub-on span, .item.sub span { font-size: 9.2px; }
.fold { margin: 1px 0 0 auto; color: #b2b5b2; }
.fold.up { transform: scaleY(-1); }
.helpc { width: 100%; height: 47px; border-top: .9px solid #e2e3e3; display: flex; align-items: center; padding: .8px 0 0 19px; color: #5d6d74; font-size: 8.9px; font-weight: 700; }
.helpc svg { color: #b2b5b2; }
.helpc span { margin-left: 8.6px; }
.main { flex: 1; padding: 0 12px 0 11.4px; display: flex; flex-direction: column; }
.crumb { height: 40.2px; display: flex; align-items: center; color: #008c73; font-size: 9px; padding-left: 3.2px; }
.crumb b { margin-left: 4.4px; }
.crumb i { color: #5d6d74; margin: 0 8.4px 0 8px; font-size: 10px; }
.crumb span { color: #5d6d74; }
.qtabs { height: 33.6px; border-bottom: .8px solid #e2e2e2; margin-right: -12px; display: flex; }
.qtab { width: 115.6px; height: 33.6px; border-bottom: 1.7px solid #008c73; color: #008c73; font-size: 9px; display: flex; align-items: center; justify-content: center; padding-top: 3px; }
.coins { height: 39.6px; padding-left: 3.8px; }
.cur { margin: 0 14px 0 auto; flex: none; width: 101px; height: 17.4px; background: #e8e7e6; border-radius: 1.6px; display: flex; align-items: center; justify-content: space-between; padding: 0 5.8px; }
.card { border-radius: 5px; background: #fff; overflow: hidden; box-shadow: 0 1px 5px rgba(0,0,0,.09); display: flex; flex-direction: column; width: 452.4px; }
.trow { display: flex; align-items: center; }
.trow > span { display: flex; align-items: center; }
.c1 { width: 120px; padding-left: 12.2px; }
.c2 { width: 100px; justify-content: flex-end; }
.c3 { width: 77.4px; justify-content: flex-end; }
.th { height: 41px; font-size: 9.8px; color: #2b3a44; }
.td { height: 70.4px; font-size: 9.9px; border-top: .8px solid #e8e7e6; border-bottom: .8px solid #e8e7e6; }
.td .c1 { padding-left: 15px; }
.coin { margin-left: 11.2px; font-size: 11.2px; }
.tgap { height: 71.2px; background: #f6f4f5; border-bottom: .8px solid #dcdcdc; }
.tfoot { height: 38.8px; display: flex; align-items: center; justify-content: flex-end; padding-right: 16.6px; font-size: 9.6px; color: #5d6d74; }
.n100 { margin-left: 14.6px; }
.car { margin: 0 28px 0 5px; }
.pg { margin: 0 13px 0 18.4px; }
.fab { position: absolute; right: 14.4px; bottom: 14.6px; width: 43.6px; height: 43.6px; border-radius: 50%; background: #008c73; box-shadow: 0 2px 7px rgba(0,0,0,.3); display: flex; align-items: center; justify-content: center; padding-top: 2px; }

/* framed capture */
.frame { position: absolute; width: 319.5px; height: 502.4px; border: 3.5px solid #000; background: #f6f4f5; overflow: hidden; z-index: 2; box-shadow: 2.4px 2.4px 4px rgba(0,0,0,.5); display: flex; flex-direction: column; }
.ptool { height: 16.1px; background: #f7f7f7; border-bottom: .9px solid #c2c2c2; display: flex; flex: none; }
.paddr { width: 254.2px; height: 12.2px; background: #fff; padding-right: 8px; border-radius: 0 0 2px 0; }
.strip { height: 3.8px; display: flex; align-items: center; justify-content: center; color: #6a6a6a; }
.paddr .strip { justify-content: flex-start; }
.paddr .url { margin-right: auto; }
.pbtn { width: 29.9px; height: 12.6px; margin-left: 6.3px; background: #cfcfcf; position: relative; }
.note { position: absolute; left: 16.6px; top: 3px; width: 9.2px; height: 9.2px; border-radius: 1.4px; background: #0078d4; color: #fff; font: 700 7px/9.2px "Open Sans", sans-serif; text-align: center; }
.pz { margin-left: 13.6px; color: #1b1b1b; }
.phead { height: 39.7px; flex: none; background: #fff; box-shadow: 0 1px 4px rgba(0,0,0,.25); display: flex; align-items: center; justify-content: flex-end; padding-right: 8.4px; z-index: 1; }
.under { flex: 1; display: flex; flex-direction: column; }
.utra { height: 41px; padding-left: 4.6px; display: flex; align-items: center; color: #008c73; font-size: 9.2px; }
.uline { height: 35.8px; border-bottom: .9px solid #dcdcdc; flex: none; }
.confirm .uline, .send .uline { background: linear-gradient(#008c73, #008c73) left bottom / 60px 1.5px no-repeat; border-bottom-width: .8px; }
.ujan { height: 31.4px; display: flex; align-items: center; padding: 7px 0 0 0; color: #5d6d74; }
.ucard { height: 39.4px; background: #fff; box-shadow: 0 1px 4px rgba(0,0,0,.18); }
.art { margin: 85.2px 0 0 auto; overflow: visible; }
.ear { font-size: 13px; fill: #001428; }
.uset { height: 40.4px; color: #008c73; font-size: 9px; padding: 19px 0 0 4.4px; }
.accounts .under { background: linear-gradient(#f6f4f5 40.4px, #fff 40.4px, #fff 420.7px, #f6f4f5 420.7px); }
.uh { height: 51.8px; font-size: 13.4px; padding: 22.4px 0 0 3.2px; }
.ut { height: 27px; font-size: 9.8px; display: flex; justify-content: space-between; padding: 0 .4px 0 3.2px; }
.ames { color: #162d45; }
.ur { height: 33px; font-size: 9.2px; padding-left: 3.2px; }
.ubox { width: 13.4px; height: 13.6px; border: 1.2px solid #6f6f6f; border-radius: 1.6px; margin: 0 0 18.6px 3.6px; }
.ubox.on { border: 0; background: #008c73; display: flex; align-items: center; justify-content: center; margin-top: -1.8px; }
.pop { position: absolute; left: 21.8px; top: 12.7px; width: 268.8px; height: 452px; background: #fff; box-shadow: 0 3px 14px rgba(0,0,0,.45), 0 0 1px rgba(0,0,0,.5); display: flex; flex-direction: column; overflow: hidden; z-index: 2; }

/* wallet home */
.whead { height: 54.2px; flex: none; background: #f2f4f6; display: flex; align-items: center; padding: 0 12.2px 0 12.7px; }
.pill { width: 115.2px; height: 25.2px; border: .8px solid #bbc0c5; border-radius: 13px; margin: 0 12.4px 0 auto; display: flex; align-items: center; justify-content: space-between; padding: 0 6.2px 0 6.4px; color: #5f6468; font-size: 9px; }
.pill i, .cpill i { width: 8.9px; height: 8.9px; border-radius: 50%; background: #f6c343; }
.me { width: 29.8px; height: 29.8px; border: 1.5px solid #037dd6; border-radius: 50%; background: #fff; display: flex; align-items: center; justify-content: center; }
.wacct { height: 48.3px; flex: none; border-bottom: .8px solid #d2d5da; display: flex; align-items: center; }
.conn { display: flex; align-items: center; gap: 5.4px; width: 104.6px; padding-left: 12.1px; color: #6a737d; font-size: 8.7px; }
.conn i { width: 5.6px; height: 5.6px; border: .9px solid #ffd35e; border-radius: 50%; }
.wname { width: 60px; display: flex; flex-direction: column; align-items: center; gap: 6.6px; padding-top: .6px; }
.nm { font-size: 11.2px; color: #000; }
.ad { display: flex; gap: 2.2px; align-items: center; color: #8b8f94; font-size: 8.8px; }
.kebab { margin: 0 12.4px 0 auto; }
.wbal { height: 176.4px; flex: none; display: flex; flex-direction: column; align-items: center; padding: 8px 0 0 .6px; }
.coinring { width: 24px; height: 24px; border: .8px solid #d6d9dc; border-radius: 50%; display: flex; align-items: center; justify-content: center; }
.bal { height: 57px; display: flex; align-items: center; font-size: 23.6px; color: #000; }
.acts { display: flex; margin-top: 6px; }
.act { width: 54.4px; display: flex; flex-direction: column; align-items: center; gap: 6.6px; color: #037dd6; font-size: 9.1px; }
.act b { width: 27.2px; height: 27.2px; border-radius: 50%; background: #037dd6; color: #fff; display: flex; align-items: center; justify-content: center; }
.wtabs { height: 23px; flex: none; border-bottom: .8px solid #d2d5da; display: flex; font-size: 10.2px; color: #4d5256; }
.wtabs span { width: 126.2px; text-align: center; margin-top: -2.6px; }
.wtabs .sel { width: 142.6px; color: #037dd6; border-bottom: 1.7px solid #037dd6; }
.hist { height: 69.8px; flex: none; border-bottom: .8px solid #d2d5da; display: flex; padding: 0 12.4px 4px 12.1px; align-items: center; }
.hic { width: 20.6px; height: 20.6px; border: .9px solid #2f80ed; border-radius: 50%; color: #2f80ed; display: flex; align-items: center; justify-content: center; }
.hl, .hr { display: flex; flex-direction: column; gap: 6.4px; }
.hl { margin-left: 12.8px; align-items: flex-start; }
.hr { margin-left: auto; align-items: flex-end; }
.ht { font-size: 11.5px; color: #000; }
.hs { font-size: 9px; color: #5b6067; }

/* accounts menu */
.menu { position: absolute; left: 22px; top: 43.9px; width: 240.7px; height: 420px; background: rgba(0,0,0,.805); border-radius: 2.4px 2.4px 0 0; color: #fff; display: flex; flex-direction: column; box-shadow: 0 1px 4px rgba(0,0,0,.3); }
.menu > div { flex: none; }
.mhead { height: 54.3px; border-bottom: .8px solid #6a6a6a; display: flex; align-items: center; justify-content: space-between; padding: 0 10.4px 0 10.9px; font-size: 11.9px; }
.mlock { width: 44.2px; height: 32.4px; border: .8px solid #62666f; border-radius: 17px; font-size: 9.2px; display: flex; flex-direction: column; align-items: center; justify-content: center; gap: 3px; }
.msearch { height: 26.2px; border-bottom: .8px solid #6a6a6a; display: flex; align-items: center; gap: 6.8px; padding-left: 7px; color: #6f6f6f; font: 12.6px/1 Roboto, sans-serif; }
.mlist { height: 151.5px; border-bottom: .8px solid #6a6a6a; display: flex; position: relative; overflow: hidden; }
.mrows { flex: 1; }
.mrow { height: 52px; display: flex; padding: 9.2px 0 0 10.7px; }
.tick { margin-top: 4px; }
.mface { margin: 0 9.2px 0 6.4px; }
.mtxt { display: flex; flex-direction: column; align-items: flex-start; gap: 4.6px; padding-top: 3.6px; }
.mn { font-size: 12.8px; }
.mb { font-size: 10px; color: #8e8e8e; }
.mside { margin-left: auto; display: flex; align-items: flex-start; padding: 3.6px 18px 0 0; }
.mrow:nth-child(2) .mside { padding-right: 10.6px; }
.mbadge { height: 11.7px; width: 52.5px; border-radius: 6px; background: #8f8f8f; color: #000; font-size: 9.2px; display: flex; align-items: center; justify-content: center; }
.msafe { width: 24px; height: 24px; border-radius: 50%; background: #eff0f3; display: flex; align-items: center; justify-content: center; margin: -3.4px 0 0 7.6px; }
.bar { width: 12.6px; background: #f1f1f1; display: flex; flex-direction: column; align-items: center; padding: 5px 0 6px; }
.bar i { width: 9.6px; height: 73px; background: #c1c1c1; margin: 4.4px 0 auto; }
.mdown { position: absolute; left: 210.8px; top: 121.8px; width: 20.8px; height: 20.8px; border-radius: 50%; background: #686868; border: .9px solid #a5a5a5; display: flex; align-items: center; justify-content: center; }
.mopts { border-bottom: .8px solid #6a6a6a; padding-top: .8px; height: 114.6px; }
.mopts.last { border: 0; padding-top: 1.6px; }
.mopt { height: 37.7px; display: flex; align-items: center; padding-left: 10.4px; font-size: 11.9px; gap: 10.4px; }
.mopts.last .mopt { gap: 8.6px; height: 36.6px; }
.mopts.last .mopt:last-child { gap: 10.4px; }
.cog { color: #b4b4b4; }

/* send */
.sendtop { height: 93px; flex: none; background: #f2f4f6; border-bottom: .8px solid #d6d9dc; padding: 13px 5.8px 0 6.3px; }
.stitle { text-align: center; font-size: 12.9px; color: #000; height: 25px; padding-top: .4px; }
.sinput { height: 47.2px; border: .9px solid #037dd6; border-radius: 4px; background: #fff; display: flex; align-items: center; padding: 0 9.4px; }
.saddrs { margin: 0 auto 0 6.8px; display: flex; flex-direction: column; align-items: flex-start; gap: 5px; color: #0376c9; font-size: 10px; }
.sx { color: #8d94a0; }
.alert { width: 244.6px; height: 38.4px; flex: none; margin: 12.7px 0 0 12.4px; border: .9px solid #75c4fd; background: #e8f4fd; border-radius: 5px; padding-left: 12.4px; display: flex; align-items: center; color: #0260a4; font-size: 8.9px; }
.field { display: flex; align-items: center; width: 244.6px; margin-left: 12.4px; flex: none; color: #4d5055; }
.fa { height: 40.2px; margin-top: 12.2px; }
.fb { height: 44px; margin-top: 12.6px; }
.lab { font-size: 11.8px; letter-spacing: .1px; }
.fbox { margin-left: auto; width: 172.8px; height: 100%; border: .8px solid #d6d9dc; border-radius: 2.4px; display: flex; align-items: center; background: #fff; }
.ering { width: 26.4px; height: 26.4px; border: .8px solid #d6d9dc; border-radius: 50%; margin: 4px 7px 0 5.8px; display: flex; align-items: center; justify-content: center; }
.ftxt { display: flex; flex-direction: column; align-items: flex-start; gap: 5.6px; padding-top: 7px; color: #3c3f44; }
.amt { justify-content: space-between; padding: 0 11.4px 0 9px; }
.amt .ftxt { padding-top: 1px; }
.big { font-size: 11.2px; line-height: 10.6px; }
.two { display: flex; gap: 7px; }
.small { font-size: 8.9px; }
.maxp { margin: 2.6px 0 0 1px; height: 15px; width: 41.4px; border: .8px solid #a6d3f5; border-radius: 8px; color: #037dd6; font-size: 8.8px; display: flex; align-items: center; justify-content: center; }
.sfoot { margin-top: auto; height: 59.2px; border-top: .9px solid #d2dadf; display: flex; justify-content: space-between; padding: 12.2px 12.1px 0 12.4px; }
.btn { width: 116.3px; height: 34.7px; border-radius: 17.4px; background: #037dd6; color: #fff; font-size: 10.1px; display: flex; align-items: center; justify-content: center; padding-bottom: 2px; }
.ghost { background: #fff; color: #037dd6; border: .9px solid #037dd6; }

/* confirm */
.cnav { height: 25.8px; flex: none; border-bottom: 1px solid #d2d8dd; display: flex; align-items: center; padding: 0 9.8px 1px 10.2px; }
.edit { margin-left: 4.6px; font-size: 11.5px; color: #2489e4; }
.cpill { margin-left: auto; width: 106px; height: 18.7px; border-radius: 10px; background: #fdf2e0; display: flex; align-items: center; gap: 6.6px; padding-left: 6.6px; color: #6a6457; font-size: 9px; }
.cfrom { height: 31.2px; flex: none; border-bottom: .8px solid #d2d8dd; display: flex; align-items: center; padding: 0 31px 0 12.7px; color: #4d4d4d; font-size: 9px; }
.cfrom span { margin-left: 10.2px; }
.cmid { width: 24px; height: 100%; margin: 0 11.4px 0 auto; display: flex; flex-direction: column; align-items: center; }
.cmid i { flex: 1; width: 1px; background: #d2d8dd; }
.cmid div { width: 24px; height: 24px; border: .9px solid #d2d8dd; border-radius: 50%; display: flex; align-items: center; justify-content: center; }
.calert { margin-top: 12.3px; }
.csum { margin-top: 12px; height: 79.8px; flex: none; background: #f7f9f9; border-bottom: .8px solid #d2d8dd; padding: 12.4px 0 0 18.2px; }
.ctag { width: 49.4px; height: 18.4px; border: .8px solid #888c91; border-radius: 2.6px; display: flex; align-items: center; justify-content: center; color: #888c91; font-size: 8.9px; }
.camt { display: flex; align-items: center; gap: 4.4px; height: 48px; padding-left: 3.6px; color: #4d4d4d; font-size: 28.4px; }
.cfees { height: 198.4px; flex: none; padding: 18.6px 30.8px 0 0; color: #6a737d; font-size: 9.4px; }
.cfees > div { display: flex; justify-content: flex-end; align-items: center; }
.cedit { height: 10px; color: #037dd6; font-size: 8.7px; }
.cl1 { height: 24.4px; gap: 4.6px; font-size: 10.2px; }
.cl1 b, .cl4 b { color: #24292e; }
.g { color: #6a737d; font-weight: 700; font-size: 9.8px; }
.cl2 { height: 12px; margin-top: 17px; }
.cl3 { height: 12px; }
.cl4 { height: 50.4px; margin: 19.4px 0 0 40px; border-top: .8px solid #a9b3bf; gap: 4.6px; font-size: 10.2px; }
.cl5 { height: 18px; gap: 3px; }
.cfoot { border-top: .8px solid #d2d8dd; flex: 1; display: flex; justify-content: flex-end; padding: 12.2px 24.6px 0 0; }
.cbtn { width: 110.4px; font-weight: 700; }

.guides { position: absolute; left: 0; top: 0; z-index: 10; fill: none; stroke: #f00; }
.guides rect { stroke-width: 3.5px; }
.guides path { stroke-width: 5.1px; }
</style>
